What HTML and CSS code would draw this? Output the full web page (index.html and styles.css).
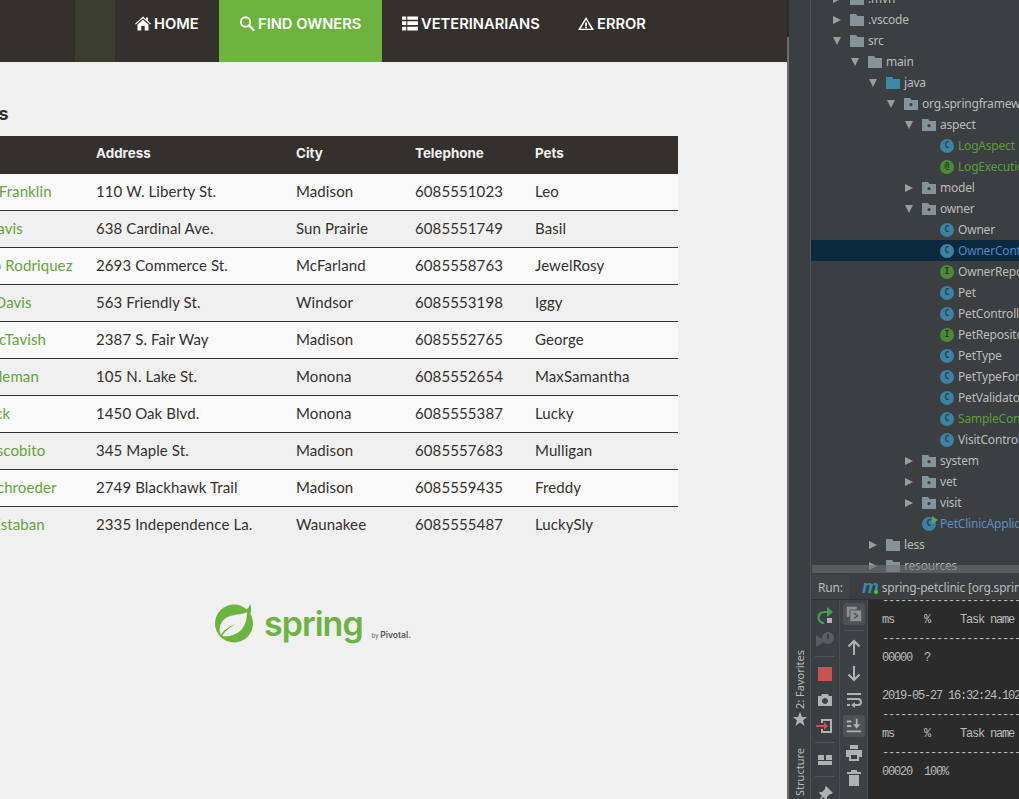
FILE: index.html
```html
<!DOCTYPE html>
<html lang="en">
<head>
<meta charset="utf-8">
<title>PetClinic</title>
<link rel="stylesheet" href="styles.css">
</head>
<body>
<svg class="defs" width="0" height="0" aria-hidden="true">
  <symbol id="folder" viewBox="0 0 14 12"><path d="M0 0h6l1.500 2H14v10H0z"/></symbol>
  <symbol id="pkg" viewBox="0 0 14 12"><path fill-rule="evenodd" d="M0 0h6l1.500 2H14v10H0zM7 5a1.600 1.600 0 1 0 .01 0z"/></symbol>
  <symbol id="right" viewBox="0 0 8 8"><path d="M0 0l8 4-8 4z"/></symbol>
  <symbol id="down" viewBox="0 0 8 8"><path d="M0 0h8L4 8z"/></symbol>
</svg>
<main class="screen">
  <section class="browser">
    <nav class="nav">
      <div class="nav-brand"></div>
      <div class="nav-accent"></div>
      <a class="nav-item nav-home"><svg class="ni" viewBox="0 0 16 14"><path d="M8 0l3 2.700V1h2v3.500L16 7.200l-.8.900L8 1.800.8 8.100 0 7.200zM2.500 8L8 3.200 13.500 8v6H9.700V9.500H6.300V14H2.500z" fill="#fff"/></svg>HOME</a>
      <a class="nav-item nav-active"><svg class="ni" viewBox="0 0 15 15"><circle cx="6" cy="6" r="4.700" fill="none" stroke="#fff" stroke-width="1.900"/><path d="M9.500 9.500L14 14" stroke="#fff" stroke-width="2.400" stroke-linecap="round"/></svg>FIND OWNERS</a>
      <a class="nav-item nav-vets"><svg class="ni" viewBox="0 0 15 13"><path d="M0 0h4v3H0zM5 0h10v3H5zM0 4.500h4v3.500H0zM5 4.500h10v3.500H5zM0 9.500h4V13H0zM5 9.500h10V13H5z" fill="#fff"/></svg>VETERINARIANS</a>
      <a class="nav-item nav-error"><svg class="ni" viewBox="0 0 17 14"><path fill-rule="evenodd" d="M8.500 0L17 14H0zM8.500 3L2.800 12.500h11.400zM7.600 6h1.800v3.800H7.600zM7.600 10.500h1.800v1.500H7.600z" fill="#fff"/></svg>ERROR</a>
    </nav>
    <div class="content">
      <h2 class="title">Owners</h2>
      <table class="owners">
        <colgroup><col class="c-name"><col class="c-addr"><col class="c-city"><col class="c-tel"><col class="c-pets"></colgroup>
        <thead><tr><th>Name</th><th>Address</th><th>City</th><th>Telephone</th><th>Pets</th></tr></thead>
        <tbody>
          <tr><td><a class="owner">George Franklin</a></td><td>110 W. Liberty St.</td><td>Madison</td><td>6085551023</td><td>Leo</td></tr>
          <tr><td><a class="owner">Betty Davis</a></td><td>638 Cardinal Ave.</td><td>Sun Prairie</td><td>6085551749</td><td>Basil</td></tr>
          <tr><td><a class="owner">Eduardo Rodriquez</a></td><td>2693 Commerce St.</td><td>McFarland</td><td>6085558763</td><td>JewelRosy</td></tr>
          <tr><td><a class="owner">Harold Davis</a></td><td>563 Friendly St.</td><td>Windsor</td><td>6085553198</td><td>Iggy</td></tr>
          <tr><td><a class="owner">Peter McTavish</a></td><td>2387 S. Fair Way</td><td>Madison</td><td>6085552765</td><td>George</td></tr>
          <tr><td><a class="owner">Jean Coleman</a></td><td>105 N. Lake St.</td><td>Monona</td><td>6085552654</td><td>MaxSamantha</td></tr>
          <tr><td><a class="owner">Jeff Black</a></td><td>1450 Oak Blvd.</td><td>Monona</td><td>6085555387</td><td>Lucky</td></tr>
          <tr><td><a class="owner">Maria Escobito</a></td><td>345 Maple St.</td><td>Madison</td><td>6085557683</td><td>Mulligan</td></tr>
          <tr><td><a class="owner">David Schroeder</a></td><td>2749 Blackhawk Trail</td><td>Madison</td><td>6085559435</td><td>Freddy</td></tr>
          <tr><td><a class="owner">Carlos Estaban</a></td><td>2335 Independence La.</td><td>Waunakee</td><td>6085555487</td><td>LuckySly</td></tr>
        </tbody>
      </table>
      <div class="logo">
        <svg class="leaf" width="40" height="40" viewBox="0 0 40 40"><circle cx="20" cy="20.500" r="19" fill="#6db33f"/><path d="M36 1C35.500 4 33.500 6 30 8L36 12C37.500 8 37.500 4 36 1z" fill="#6db33f"/><path d="M33 9C26 13 14 10 8 19C5 23 5 28 7 32C9 28 14 24 21 21C14 26 10 29 8.500 33C12 34 22 33 28 26C32 21 33 15 33 9z" fill="#f0f0f0"/></svg>
        <span class="wordmark">spring</span>
        <span class="by">by <b>Pivotal.</b></span>
      </div>
    </div>
  </section>
  <section class="ide">
    <div class="edge"></div>
    <aside class="stripe">
      <span class="stripe-label">2: Favorites</span>
      <svg class="star" width="14" height="14" viewBox="0 0 14 14"><path d="M7 0l2 5h5l-4 3.200L11.500 14 7 10.600 2.500 14 4 8.200 0 5h5z" fill="#afb1b3"/></svg>
      <span class="stripe-label">7: Structure</span>
    </aside>
    <div class="ide-main">
      <div class="tree">
        <div class="row l0"><svg class="arr"><use href="#right"/></svg><svg class="fi"><use href="#folder"/></svg>.mvn</div>
        <div class="row l0"><svg class="arr"><use href="#right"/></svg><svg class="fi"><use href="#folder"/></svg>.vscode</div>
        <div class="row l0"><svg class="arr"><use href="#down"/></svg><svg class="fi"><use href="#folder"/></svg>src</div>
        <div class="row l1"><svg class="arr"><use href="#down"/></svg><svg class="fi"><use href="#folder"/></svg>main</div>
        <div class="row l2"><svg class="arr"><use href="#down"/></svg><svg class="fi blue"><use href="#folder"/></svg>java</div>
        <div class="row l3"><svg class="arr"><use href="#down"/></svg><svg class="fi"><use href="#pkg"/></svg>org.springframework.samples</div>
        <div class="row l4"><svg class="arr"><use href="#down"/></svg><svg class="fi"><use href="#pkg"/></svg>aspect</div>
        <div class="row l5 green"><i class="ci">C</i>LogAspect</div>
        <div class="row l5 green"><i class="ci ci-g">@</i>LogExecutionTime</div>
        <div class="row l4"><svg class="arr"><use href="#right"/></svg><svg class="fi"><use href="#pkg"/></svg>model</div>
        <div class="row l4"><svg class="arr"><use href="#down"/></svg><svg class="fi"><use href="#pkg"/></svg>owner</div>
        <div class="row l5"><i class="ci">C</i>Owner</div>
        <div class="row l5 sel"><i class="ci">C</i>OwnerController</div>
        <div class="row l5"><i class="ci ci-g">I</i>OwnerRepository</div>
        <div class="row l5"><i class="ci">C</i>Pet</div>
        <div class="row l5"><i class="ci">C</i>PetController</div>
        <div class="row l5"><i class="ci ci-g">I</i>PetRepository</div>
        <div class="row l5"><i class="ci">C</i>PetType</div>
        <div class="row l5"><i class="ci">C</i>PetTypeFormatter</div>
        <div class="row l5"><i class="ci">C</i>PetValidator</div>
        <div class="row l5 green"><i class="ci">C</i>SampleController</div>
        <div class="row l5"><i class="ci">C</i>VisitController</div>
        <div class="row l4"><svg class="arr"><use href="#right"/></svg><svg class="fi"><use href="#pkg"/></svg>system</div>
        <div class="row l4"><svg class="arr"><use href="#right"/></svg><svg class="fi"><use href="#pkg"/></svg>vet</div>
        <div class="row l4"><svg class="arr"><use href="#right"/></svg><svg class="fi"><use href="#pkg"/></svg>visit</div>
        <div class="row l4b blue-t"><i class="ci ci-run">C</i>PetClinicApplication</div>
        <div class="row l2"><svg class="arr"><use href="#right"/></svg><svg class="fi"><use href="#folder"/></svg>less</div>
        <div class="row l2"><svg class="arr"><use href="#right"/></svg><svg class="fi"><use href="#folder"/></svg>resources</div>
        <div class="hbar"></div>
      </div>
      <div class="runbar">
        <span class="run-label">Run:</span>
        <span class="run-tab"><b class="mvn">m</b>spring-petclinic [org.springframework]</span>
      </div>
      <div class="run-body">
        <div class="tools tools-a">
          <svg class="t t-first" viewBox="0 0 20 20"><path d="M14 6H9a5.500 5.500 0 1 0 0 11" fill="none" stroke="#499c54" stroke-width="2.200"/><path d="M12 1l6 5-6 5z" fill="#499c54"/><path d="M12 12h5v5h-5z" fill="#afb1b3"/></svg>
          <svg class="t" viewBox="0 0 20 20"><path d="M1 5l9 6-9 6z" fill="#5a5d5f"/><circle cx="13" cy="8" r="6" fill="#5a5d5f"/><path d="M13 4v5" stroke="#3c3f41" stroke-width="2"/></svg>
          <i class="sep"></i>
          <svg class="t" viewBox="0 0 20 20"><rect x="3" y="3" width="14" height="14" fill="#c75450"/></svg>
          <svg class="t" viewBox="0 0 20 20"><path fill-rule="evenodd" d="M3 6h3l1-2h6l1 2h3v10H3zM10 8a3 3 0 1 0 .01 0z" fill="#afb1b3"/></svg>
          <svg class="t" viewBox="0 0 20 20"><path d="M6 3h11v14H6v-4h2v2h7V5H8v2H6z" fill="#afb1b3"/><path d="M1 9h8V6l4 4-4 4v-3H1z" fill="#c75450"/></svg>
          <i class="sep"></i>
          <svg class="t" viewBox="0 0 20 20"><path d="M3 5h6v5H3zM11 5h6v5h-6zM3 11h14v4H3z" fill="#afb1b3"/></svg>
          <i class="sep"></i>
          <svg class="t" viewBox="0 0 20 20"><path d="M11 2l7 7-2 1-1 0-3 3 0 2-1 1-3-3-5 6-1-1 5-6-3-3 1-1 2 0 3-3 0-1z" fill="#afb1b3"/></svg>
        </div>
        <div class="tools tools-b">
          <span class="tb-on"><svg class="t" viewBox="0 0 20 20"><path d="M2 2h11v3H5v8H2z" fill="#8f9193"/><path d="M6 6h12v12H6z" fill="#8f9193"/><path d="M10 9l4 3-4 3" fill="none" stroke="#4e5254" stroke-width="1.500"/></svg></span>
          <i class="sep sep-b"></i>
          <svg class="t" viewBox="0 0 20 20"><path d="M10 18V4M4.500 9.500L10 4l5.500 5.500" fill="none" stroke="#afb1b3" stroke-width="2"/></svg>
          <svg class="t t-down" viewBox="0 0 20 20"><path d="M10 2v14M4.500 10.500L10 16l5.500-5.500" fill="none" stroke="#afb1b3" stroke-width="2"/></svg>
          <svg class="t t-wrap" viewBox="0 0 20 20"><path d="M3 4h14M3 9h11a3 3 0 0 1 0 6h-4M3 15h3" fill="none" stroke="#afb1b3" stroke-width="2"/><path d="M11 12v6l-4-3z" fill="#afb1b3"/></svg>
          <span class="tb-on"><svg class="t" viewBox="0 0 20 20"><path d="M2 4h5v2H2zM2 9h5v2H2zM2 15h16v2H2z" fill="#afb1b3"/><path d="M12 2h2v6h3l-4 5-4-5h3z" fill="#afb1b3"/></svg></span>
          <svg class="t t-print" viewBox="0 0 20 20"><path d="M6 2h8v4H6zM2 7h16v7h-3v4H5v-4H2zM7 12v4h6v-4z" fill="#afb1b3" fill-rule="evenodd"/></svg>
          <svg class="t t-trash" viewBox="0 0 20 20"><path d="M7 2h6v2h4v2H3V4h4zM5 7h10v11H5z" fill="#afb1b3"/></svg>
        </div>
        <pre class="console">-------------------------------
ms     %     Task name
-------------------------------
00000  ?

2019-05-27 16:32:24.102  INFO
-------------------------------
ms     %     Task name
-------------------------------
00020  100%</pre>
      </div>
    </div>
  </section>
</main>
</body>
</html>
```
FILE: styles.css
```css
* { box-sizing: border-box; }
html, body { margin: 0; height: 100%; }
body { overflow: hidden; background: #3c3f41; }
.defs { position: absolute; }
.screen { display: flex; width: 1019px; height: 799px; overflow: hidden; }

.browser { width: 787px; flex: none; background: #f0f0f0; overflow: hidden; font-family: "Lato", "Open Sans", sans-serif; color: #34302d; }
.nav { display: flex; height: 62px; background: #34302d; }
.nav-brand { width: 75px; }
.nav-accent { width: 40px; background: #3a3d30; }
.nav-item { display: flex; align-items: center; height: 47px; color: #fff; font-family: "Inter", "Open Sans", sans-serif; font-weight: 600; font-size: 14.700px; }
.ni { height: 15px; width: 16px; margin-right: 3px; flex: none; }
.nav-home { width: 104px; padding-left: 20px; }
.nav-active { width: 163px; height: 62px; padding: 0 0 15px 20px; background: #6db33f; }
.nav-vets { width: 176px; padding-left: 20px; }
.nav-error { padding-left: 20px; }

.content { padding-top: 40px; }
.title { margin: 0 0 10px -60px; height: 24px; font: 700 18px/24px "Inter", sans-serif; }
.owners { width: 740px; margin-left: -62px; border-collapse: collapse; table-layout: fixed; font-size: 15px; letter-spacing: .1px; }
.c-name { width: 150px; }
.c-addr { width: 200px; }
.c-city { width: 119px; }
.c-tel { width: 120px; }
.owners th { height: 38px; padding: 0 8px 4px; text-align: left; background: #34302d; color: #f1f1f1; font: 700 13.400px "Inter", sans-serif; letter-spacing: 0; white-space: nowrap; }
.owners td { height: 37px; padding: 0 8px 2px; border-top: 1px solid #34302d; white-space: nowrap; }
.owners tbody tr:first-child td { border-top: 0; height: 36px; padding-bottom: 1px; }
.owners tbody tr:nth-child(odd) { background: #f9f9f9; }
.owner { color: #65a33b; }
.logo { display: flex; align-items: flex-end; margin: 60px 0 0 214px; height: 40px; }
.wordmark { font: 600 34px/38px "Inter", sans-serif; color: #6db33f; letter-spacing: -1px; margin-left: 10px; }
.by { font: 400 6px/14px "Inter", sans-serif; color: #555; margin-left: 9px; }
.by b { font-size: 8.500px; font-weight: 600; }

.ide { flex: 1; display: flex; background: #3c3f41; font-family: "Noto Sans", "Open Sans", sans-serif; }
.edge { width: 2px; flex: none; background: linear-gradient(#2b2b2b 37px, #6b6d6f 37px); }
.stripe { width: 22px; flex: none; background: #3c3f41; border-right: 1px solid #505355; display: flex; flex-direction: column; align-items: center; padding-top: 650px; overflow: hidden; }
.stripe-label { writing-mode: vertical-rl; transform: rotate(180deg); font-size: 11px; line-height: 14px; color: #bbb; white-space: nowrap; flex: none; }
.star { margin: 3px 0 22px; flex: none; }
.ide-main { flex: 1; min-width: 0; display: flex; flex-direction: column; overflow: hidden; }

.tree { height: 587px; overflow: hidden; position: relative; margin-top: -12px; flex: none; }
.row { display: flex; align-items: center; height: 21px; font-size: 12px; letter-spacing: -.2px; color: #bbb; white-space: nowrap; }
.arr { width: 8px; height: 8px; fill: #9a9c9e; margin-right: 9px; flex: none; }
.fi { width: 14px; height: 12px; fill: #87939a; margin-right: 4px; flex: none; }
.fi.blue { fill: #3d88a8; }
.l0 { padding-left: 22px; }
.l1 { padding-left: 40px; }
.l2 { padding-left: 58px; }
.l3 { padding-left: 76px; }
.l4 { padding-left: 94px; }
.l4b { padding-left: 111px; }
.l5 { padding-left: 129px; }
.green { color: #5a9c3f; }
.blue-t { color: #5c8fc4; }
.sel { background: #0d293e; color: #4a88c7; }
.ci { width: 14px; height: 14px; border-radius: 50%; background: #3d81a3; color: #26404e; font: 700 8px/14px "DejaVu Sans Mono", monospace; letter-spacing: 0; text-align: center; margin-right: 4px; flex: none; position: relative; }
.ci-g { background: #4e8a39; color: #22391a; }
.ci-run::after { content: ""; position: absolute; top: -1px; right: -2px; width: 0; height: 0; border-left: 6px solid #59a869; border-top: 4px solid transparent; border-bottom: 4px solid transparent; }
.hbar { position: absolute; left: 1px; right: 0; top: 577px; height: 8px; background: rgba(110,112,114,.6); }

.runbar { height: 25px; flex: none; display: flex; align-items: center; font-size: 12px; letter-spacing: -.2px; color: #bbb; background: #3c3f41; border-bottom: 1px solid #323232; white-space: nowrap; overflow: hidden; }
.run-label { width: 38px; height: 25px; line-height: 25px; padding-left: 7px; background: #404446; flex: none; }
.run-tab { padding-left: 13px; display: flex; align-items: center; }
.mvn { font: italic 700 19px/20px "Liberation Sans", sans-serif; color: #3d88a8; margin-right: 3px; position: relative; }
.mvn::after { content: ""; position: absolute; right: 1px; bottom: 3px; width: 4px; height: 4px; border-radius: 50%; background: #1ee01e; }
.run-body { flex: 1; display: flex; min-height: 0; overflow: hidden; }
.tools { width: 29px; flex: none; display: flex; flex-direction: column; align-items: center; padding-top: 3px; border-right: 1px solid #4b4e50; }
.tools-b { background: #3d4143; width: 28px; }
.t { width: 20px; height: 20px; margin: 3px 0; flex: none; }
.t-first { margin-bottom: 1px; }
.t-down { margin-top: 4px; }
.t-wrap { margin-bottom: 5px; }
.t-print { margin-top: 6px; }
.t-trash { margin-top: 2px; }
.sep { width: 20px; height: 1px; background: #515456; margin: 3px 0 4px; flex: none; }
.sep-b { margin: 5px 0 3px; }
.tb-on { width: 22px; height: 22px; display: flex; align-items: center; justify-content: center; border-radius: 3px; background: #4e5254; flex: none; }
.tb-on .t { margin: 0; width: 18px; height: 18px; }
.console { flex: 1; margin: -8px 0 0; padding: 0 0 0 14px; background: #2b2b2b; color: #bbb; font: 12px/19px "Liberation Mono", monospace; letter-spacing: -1.200px; overflow: hidden; white-space: pre; }
```
